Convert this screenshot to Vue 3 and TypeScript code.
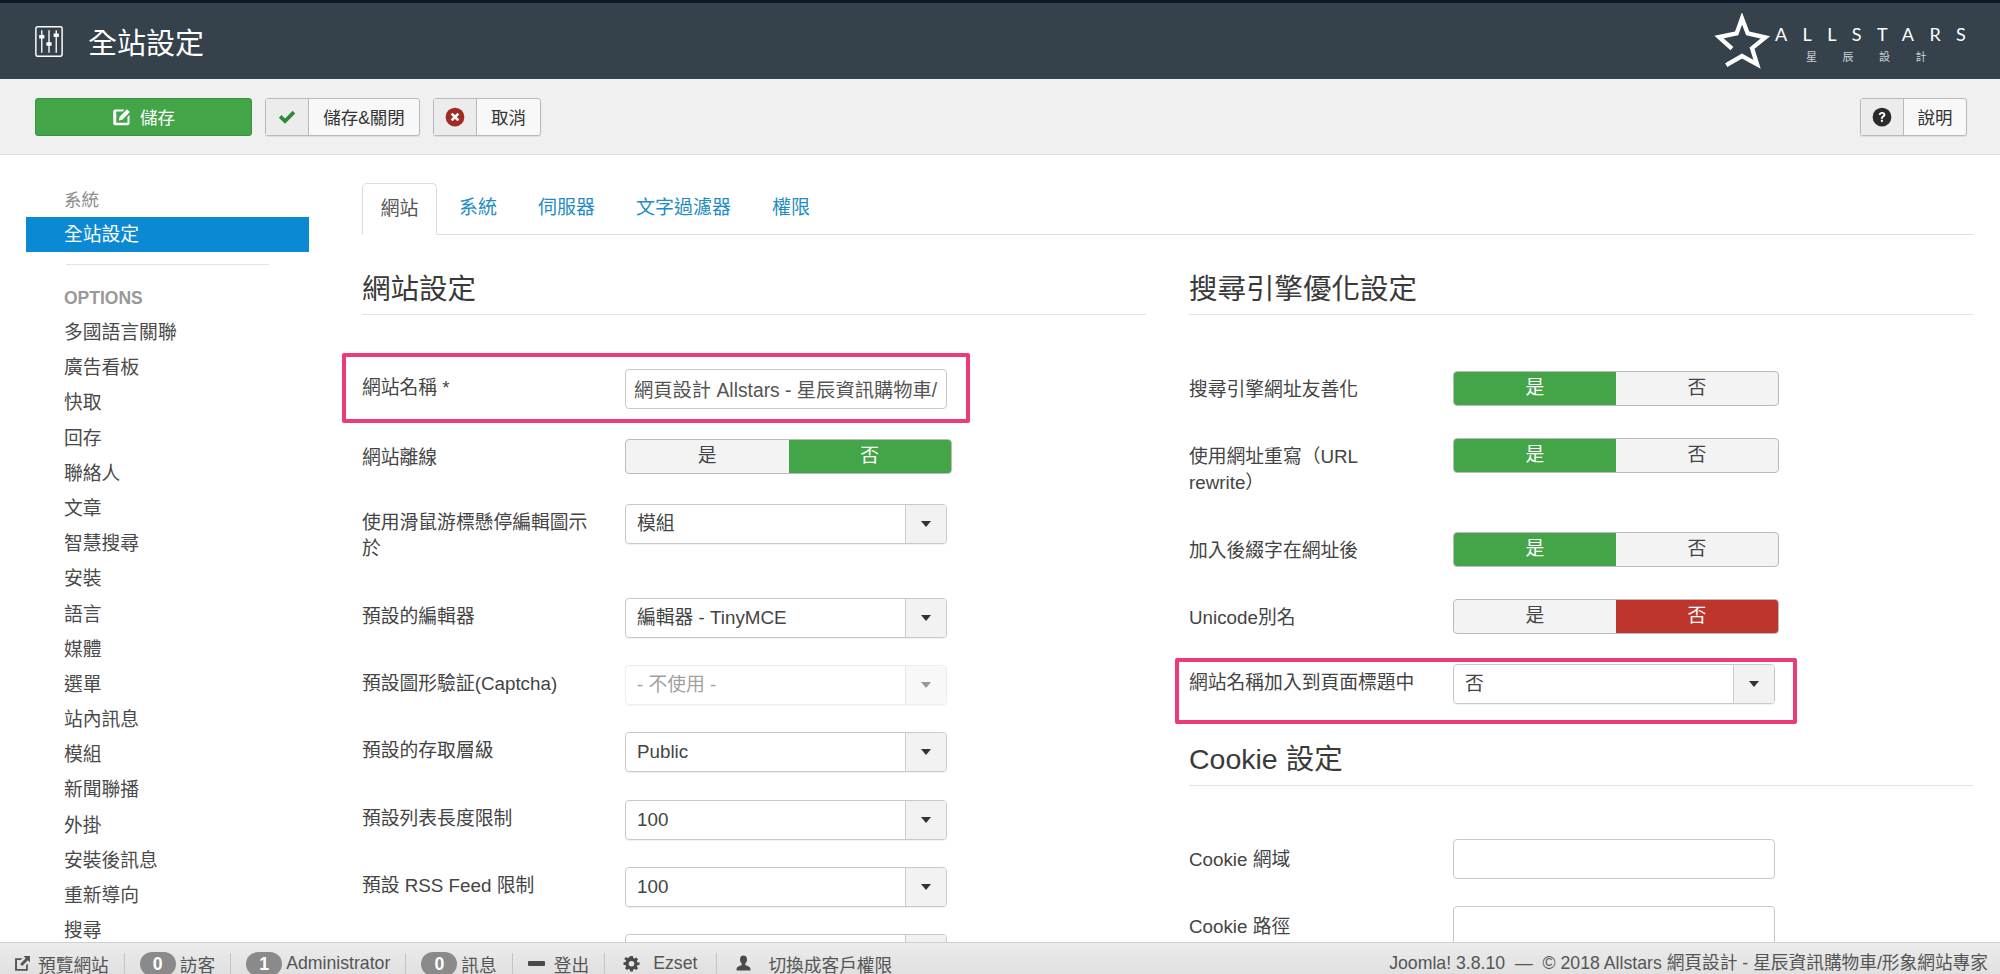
<script setup lang="ts">
interface Row {
  label: string;
  kind: 'input' | 'select' | 'toggle';
  size: string;
  value?: string;
  yes?: boolean;
  red?: boolean;
  disabled?: boolean;
  mark?: boolean;
}

const menu = ['多國語言關聯', '廣告看板', '快取', '回存', '聯絡人', '文章', '智慧搜尋', '安裝', '語言', '媒體', '選單', '站內訊息', '模組', '新聞聯播', '外掛', '安裝後訊息', '重新導向', '搜尋'];
const tabs = ['系統', '伺服器', '文字過濾器', '權限'];

const leftRows: Row[] = [
  { label: '網站名稱 *', kind: 'input', size: 'r70', value: '網頁設計 Allstars - 星辰資訊購物車/', mark: true },
  { label: '網站離線', kind: 'toggle', size: 'r65', yes: false },
  { label: '使用滑鼠游標懸停編輯圖示於', kind: 'select', size: 'r94', value: '模組' },
  { label: '預設的編輯器', kind: 'select', size: 'r67', value: '編輯器 - TinyMCE' },
  { label: '預設圖形驗証(Captcha)', kind: 'select', size: 'r67', value: '- 不使用 -', disabled: true },
  { label: '預設的存取層級', kind: 'select', size: 'r68', value: 'Public' },
  { label: '預設列表長度限制', kind: 'select', size: 'r67', value: '100' },
  { label: '預設 RSS Feed 限制', kind: 'select', size: 'r67', value: '100' },
  { label: '', kind: 'select', size: 'r67', value: '' },
];

const rightRows: Row[] = [
  { label: '搜尋引擎網址友善化', kind: 'toggle', size: 'r67', yes: true },
  { label: '使用網址重寫（URL rewrite）', kind: 'toggle', size: 'r94', yes: true },
  { label: '加入後綴字在網址後', kind: 'toggle', size: 'r67', yes: true },
  { label: 'Unicode別名', kind: 'toggle', size: 'r65', yes: false, red: true },
  { label: '網站名稱加入到頁面標題中', kind: 'select', size: 'r0', value: '否', mark: true },
];

const cookieRows: Row[] = [
  { label: 'Cookie 網域', kind: 'input', size: 'r67', value: '' },
  { label: 'Cookie 路徑', kind: 'input', size: 'r67', value: '' },
];
</script>

<template>
  <div class="page">
    <header class="topbar">
      <div class="title">
        <svg class="title-icon" viewBox="0 0 27 30" fill="none" stroke="#fff">
          <rect x="0.8" y="0.8" width="25.4" height="28.4" rx="1.5" stroke-width="1.4" />
          <path d="M6.5 4v22M13.5 4v22M20.5 4v22" stroke-width="1.3" />
          <path d="M4 10.5h5M11 17.5h5M18 9h5" stroke-width="3.4" />
        </svg>
        <h1>全站設定</h1>
      </div>
      <div class="logo">
        <svg class="star" viewBox="40 22 160 156" fill="none" stroke="#fff" stroke-width="12" stroke-miterlimit="8">
          <path d="M92 121L56 89L105 79L120 37L136 79L185 90L148 120L162 165L120 142L76 167" />
        </svg>
        <div class="logo-text">
          <div class="logo-en">ALLSTARS</div>
          <div class="logo-zh">星辰設計</div>
        </div>
      </div>
    </header>

    <div class="toolbar">
      <button class="btn btn-save">
        <svg class="ico" viewBox="0 0 16 16" fill="#fff">
          <path d="M2.5 2h7.5L8.4 3.6H3.4v9h9V8l1.6-1.6v6.6c0 .9-.7 1.6-1.6 1.6H2.5c-.8 0-1.5-.7-1.5-1.6V3.6C1 2.7 1.7 2 2.5 2z" />
          <path d="M6 8l6-6.2L14.3 4l-6 6.200-2.800.5z" />
        </svg>
        儲存
      </button>
      <button class="btn btn-split close-btn">
        <span class="btn-ico">
          <svg class="ico" viewBox="0 0 16 16"><path d="M1.500 8.500L3.600 6.300L6.400 9.100L12.500 3L14.600 5.200L6.400 13.300z" fill="#2f8a3b" /></svg>
        </span>
        <span class="btn-txt">儲存&amp;關閉</span>
      </button>
      <button class="btn btn-split cancel-btn">
        <span class="btn-ico">
          <svg class="ico" viewBox="0 0 16 16">
            <circle cx="8" cy="8" r="7.500" fill="#a32a22" />
            <path d="M5.300 5.300l5.400 5.400M10.700 5.300l-5.400 5.400" stroke="#fff" stroke-width="2.200" />
          </svg>
        </span>
        <span class="btn-txt">取消</span>
      </button>
      <button class="btn btn-split help-btn">
        <span class="btn-ico">
          <svg class="ico" viewBox="0 0 16 16">
            <circle cx="8" cy="8" r="7.500" fill="#2b2b2b" />
            <path d="M5.400 6.300C5.500 4.800 6.600 4 8.100 4c1.500 0 2.600.9 2.600 2.200 0 1.800-2 1.800-2 3.200H7.100c0-2.200 1.900-2.200 1.900-3.200 0-.5-.4-.8-1-.8-.6 0-1 .4-1.100 1z" fill="#fff" />
            <rect x="7.100" y="10.200" width="1.600" height="1.700" fill="#fff" />
          </svg>
        </span>
        <span class="btn-txt">說明</span>
      </button>
    </div>

    <div class="body">
      <aside class="sidebar">
        <div class="side-group">系統</div>
        <div class="side-active">全站設定</div>
        <div class="side-divider"></div>
        <div class="side-head">OPTIONS</div>
        <div v-for="item in menu" :key="item" class="side-item">{{ item }}</div>
      </aside>

      <main class="content">
        <nav class="tabs">
          <span class="tab tab-active">網站</span>
          <span v-for="tab in tabs" :key="tab" class="tab">{{ tab }}</span>
        </nav>

        <div class="columns">
          <section class="col">
            <h2>網站設定</h2>
            <div class="rows">
              <div v-for="row in leftRows" :key="row.label" class="row" :class="[row.size, { mark: row.mark }]">
                <label class="lbl">{{ row.label }}</label>
                <input v-if="row.kind === 'input'" class="field" readonly :value="row.value" />
                <div v-else-if="row.kind === 'select'" class="select" :class="{ off: row.disabled }">
                  <span class="select-val">{{ row.value }}</span>
                  <span class="select-arrow"><i class="caret"></i></span>
                </div>
                <div v-else class="toggle">
                  <span class="opt" :class="{ on: row.yes }">是</span>
                  <span class="opt" :class="{ on: !row.yes, red: row.red }">否</span>
                </div>
              </div>
            </div>
          </section>

          <section class="col">
            <h2>搜尋引擎優化設定</h2>
            <div class="rows rows-right">
              <div v-for="row in rightRows" :key="row.label" class="row" :class="[row.size, { mark: row.mark }]">
                <label class="lbl">{{ row.label }}</label>
                <div v-if="row.kind === 'select'" class="select">
                  <span class="select-val">{{ row.value }}</span>
                  <span class="select-arrow"><i class="caret"></i></span>
                </div>
                <div v-else class="toggle">
                  <span class="opt" :class="{ on: row.yes }">是</span>
                  <span class="opt" :class="{ on: !row.yes, red: row.red }">否</span>
                </div>
              </div>
            </div>
            <h2 class="cookie-head">Cookie 設定</h2>
            <div class="rows rows-right cookie-rows">
              <div v-for="row in cookieRows" :key="row.label" class="row" :class="row.size">
                <label class="lbl">{{ row.label }}</label>
                <input class="field" readonly :value="row.value" />
              </div>
            </div>
          </section>
        </div>
      </main>
    </div>

    <footer class="status">
      <div class="status-left">
        <span class="st st-first">
          <svg class="st-ico" viewBox="0 0 16 16" fill="#555">
            <path d="M1 3h7L6.400 4.700H2.800v8.500h8.500V9.600L13 8v6.900H1z" />
            <path d="M9 1h6v6l-2-2-5.300 5.300-1.900-1.900L11 3z" />
          </svg>
          預覽網站
        </span>
        <span class="st"><b class="badge">0</b>訪客</span>
        <span class="st"><b class="badge">1</b>Administrator</span>
        <span class="st"><b class="badge">0</b>訊息</span>
        <span class="st st-gap"><i class="minus"></i>登出</span>
        <span class="st st-cog">
          <svg class="st-ico" viewBox="0 0 16 16">
            <path d="M6.500 0h3l.4 2.200 1.500.7L13.300 1.600l2 2.200-1.300 1.900.6 1.500L17 7v2.800l-2.400.5-.6 1.500 1.300 1.900-2 2.100-1.900-1.300-1.500.6L9.500 17.500h-3l-.4-2.400-1.500-.6-1.900 1.300-2-2.100 1.300-1.900-.6-1.500L-1 9.800V7l2.400-.3.6-1.500L-.3 3.300l2-2.200 1.900 1.300 1.500-.7z" transform="translate(1.300 .9) scale(.84)" fill="#4a4a4a" />
            <circle cx="8" cy="8.200" r="2.600" fill="#e6e6e6" />
          </svg>
          Ezset
        </span>
        <span class="st st-user">
          <svg class="st-ico" viewBox="0 0 16 16" fill="#4a4a4a">
            <path d="M8 .5c2 0 3.300 1.500 3.300 3.700 0 1.700-.8 3-1.600 3.800v1.500c.6.500 4.800 1.500 4.800 3.500v1.500h-13V13c0-2 4.200-3 4.800-3.500V8C5.500 7.200 4.700 5.900 4.700 4.200 4.700 2 6 .5 8 .5z" />
          </svg>
          切換成客戶權限
        </span>
      </div>
      <div class="status-right">Joomla! 3.8.10 &nbsp;—&nbsp; © 2018 Allstars 網頁設計 - 星辰資訊購物車/形象網站專家</div>
    </footer>
  </div>
</template>

<style>
html,
body {
  height: 100%;
  overflow: hidden;
}
</style>

<style scoped>
.page {
  height: 974px;
  overflow: hidden;
  position: relative;
  background: #fff;
  color: #444;
  font-family: "Liberation Sans", "Noto Sans CJK TC", sans-serif;
  font-size: 18.8px;
}

.topbar {
  height: 76px;
  border-top: 3px solid #0e1728;
  background: #35424c;
  display: flex;
  align-items: center;
  justify-content: space-between;
  padding: 0 33px 0 35px;
}
.title {
  display: flex;
  align-items: center;
  gap: 25px;
}
.title-icon {
  width: 28px;
  height: 31px;
}
h1 {
  margin: 0;
  color: #fff;
  font-size: 29px;
  font-weight: 400;
}
.logo {
  display: flex;
  align-items: flex-start;
  gap: 4px;
}
.star {
  width: 58px;
  height: 56px;
}
.logo-text {
  color: #fff;
  width: 192px;
  padding-top: 10px;
}
.logo-en {
  font-family: Lato, "Liberation Sans", sans-serif;
  font-size: 18px;
  letter-spacing: 15.400px;
  white-space: nowrap;
  line-height: 22px;
}
.logo-zh {
  font-size: 11px;
  letter-spacing: 25.500px;
  padding-left: 31px;
  margin-top: 6px;
  line-height: 13px;
  white-space: nowrap;
  color: #ccd1d5;
}

.toolbar {
  height: 75px;
  background: #f0f0f0;
  border-bottom: 1px solid #e0e0e0;
  display: flex;
  align-items: center;
  gap: 13px;
  padding: 0 33px 0 35px;
  box-sizing: content-box;
}
.btn {
  height: 38px;
  box-sizing: border-box;
  border-radius: 3px;
  font: inherit;
  font-size: 17.500px;
  display: flex;
  align-items: center;
  padding: 0;
  color: #333;
}
.ico {
  width: 20px;
  height: 20px;
  display: block;
}
.btn-save {
  width: 217px;
  justify-content: center;
  gap: 8px;
  background: #43a548;
  border: 1px solid #3a9140;
  color: #fff;
}
.btn-split {
  background: #f8f8f8;
  border: 1px solid #b9b9b9;
  box-shadow: 0 1px 1px rgba(0, 0, 0, 0.08);
}
.btn-ico {
  width: 42px;
  height: 100%;
  display: flex;
  align-items: center;
  justify-content: center;
  background: #ececec;
  border-right: 1px solid #b9b9b9;
  flex: none;
}
.btn-txt {
  flex: 1;
  text-align: center;
}
.close-btn {
  width: 155px;
}
.cancel-btn {
  width: 108px;
}
.help-btn {
  width: 107px;
  margin-left: auto;
}

.body {
  display: flex;
  align-items: flex-start;
}
.sidebar {
  width: 283px;
  margin-left: 26px;
  flex: none;
  padding-top: 32px;
}
.side-group {
  padding-left: 38px;
  height: 30px;
  line-height: 26px;
  color: #8c8c8c;
  font-size: 17.500px;
}
.side-active {
  height: 35px;
  line-height: 36px;
  padding-left: 38px;
  background: #0b8ad3;
  color: #fff;
}
.side-divider {
  height: 1px;
  background: #e4e4e4;
  margin: 12px 40px 0;
}
.side-head {
  padding-left: 38px;
  margin-top: 20px;
  height: 30px;
  line-height: 26px;
  font-size: 17.500px;
  font-weight: 700;
  color: #999;
}
.side-item {
  padding-left: 38px;
  height: 35.200px;
  line-height: 35.200px;
  color: #4a4a4a;
}

.content {
  width: 1611px;
  margin-left: 53px;
  padding-top: 28px;
}
.tabs {
  display: flex;
  height: 52px;
  box-sizing: border-box;
  border-bottom: 1px solid #ddd;
}
.tab {
  height: 52px;
  line-height: 50px;
  padding: 0 22px 0 19px;
  margin-right: 0;
  color: #1f8dc4;
  font-size: 19px;
  box-sizing: border-box;
}
.tab-active {
  width: 75px;
  padding: 0;
  text-align: center;
  color: #555;
  background: #fff;
  border: 1px solid #ddd;
  border-bottom-color: #fff;
  border-radius: 5px 5px 0 0;
  margin-right: 3px;
}

.columns {
  display: flex;
  gap: 43px;
}
.col {
  width: 784px;
  flex: none;
}
h2 {
  margin: 34px 0 0;
  height: 46px;
  box-sizing: border-box;
  line-height: 40px;
  font-size: 28.500px;
  font-weight: 400;
  color: #3a3a3a;
  border-bottom: 1px solid #e3e3e3;
}
.rows {
  margin-top: 54px;
}
.rows-right {
  margin-top: 56px;
}
.cookie-head {
  margin-top: 35px;
  height: 47px;
}
.cookie-rows {
  margin-top: 53px;
}
.row {
  display: flex;
  align-items: flex-start;
  position: relative;
}
.r70 {
  height: 70px;
}
.r65 {
  height: 65px;
}
.r67 {
  height: 67px;
}
.r68 {
  height: 68px;
}
.r94 {
  height: 94px;
}
.r0 {
  height: 40px;
}
.mark::after {
  content: "";
  position: absolute;
  left: -20px;
  top: -16px;
  width: 628px;
  height: 70px;
  box-sizing: border-box;
  border: 4px solid #ee3a78;
  border-radius: 2px;
  pointer-events: none;
}
.rows-right .mark::after {
  left: -14px;
  top: -6px;
  width: 622px;
  height: 66px;
}
.lbl {
  width: 263px;
  padding-right: 30px;
  box-sizing: border-box;
  flex: none;
  line-height: 26px;
  padding-top: 6px;
  color: #444;
}
.rows-right .lbl {
  width: 264px;
}
.cookie-rows .lbl {
  padding-top: 8px;
}
.field {
  width: 322px;
  height: 40px;
  box-sizing: border-box;
  border: 1px solid #c9c9c9;
  border-radius: 4px;
  padding: 0 8px;
  font: inherit;
  font-size: 19.300px;
  color: #555;
  outline: none;
  background: #fff;
}
.select {
  width: 322px;
  height: 40px;
  box-sizing: border-box;
  border: 1px solid #c9c9c9;
  border-radius: 4px;
  display: flex;
  box-shadow: 0 1px 1px rgba(0, 0, 0, 0.06);
  color: #444;
}
.select-val {
  flex: 1;
  padding-left: 11px;
  line-height: 37px;
}
.select-arrow {
  width: 40px;
  flex: none;
  background: #f2f2f2;
  border-left: 1px solid #ccc;
  display: flex;
  align-items: center;
  justify-content: center;
  border-radius: 0 3px 3px 0;
}
.caret {
  border-top: 6px solid #333;
  border-left: 5px solid transparent;
  border-right: 5px solid transparent;
}
.off {
  opacity: 0.5;
  border-color: #ddd;
}
.toggle {
  width: 327px;
  height: 35px;
  display: flex;
  box-sizing: border-box;
  border-radius: 4px;
  border: 1px solid #bbb;
  background: #f3f3f3;
  overflow: hidden;
}
.rows-right .toggle {
  width: 326px;
}
.opt {
  flex: 1;
  text-align: center;
  line-height: 32px;
  color: #444;
}
.opt.on {
  background: #43a548;
  color: #fff;
}
.opt.red {
  background: #bd352b;
}

.status {
  position: absolute;
  left: 0;
  right: 0;
  bottom: 0;
  height: 32px;
  box-sizing: border-box;
  border-top: 1px solid #cfcfcf;
  background: linear-gradient(#ececec, #e0e0e0);
  display: flex;
  justify-content: space-between;
  align-items: stretch;
  color: #555;
  font-size: 17.700px;
  padding: 10px 12px 0 14px;
  overflow: hidden;
}
.status-left {
  display: flex;
  align-items: stretch;
}
.st {
  display: flex;
  align-items: center;
  gap: 4px;
  padding-right: 16px;
  margin-right: 15px;
  position: relative;
  white-space: nowrap;
}
.st::after {
  content: "";
  position: absolute;
  right: 0;
  top: 0;
  bottom: 0;
  width: 1px;
  background: #c4c4c4;
}
.st:last-child::after {
  display: none;
}
.st-first {
  gap: 7px;
}
.st-gap {
  gap: 9px;
}
.st-cog {
  gap: 13px;
  padding-right: 20px;
  padding-left: 3px;
}
.st-user {
  gap: 16px;
  padding-left: 3px;
}
.st-ico {
  width: 17px;
  height: 17px;
  flex: none;
}
.badge {
  width: 36px;
  height: 24px;
  flex: none;
  border-radius: 12px;
  background: #8a8a8a;
  color: #fff;
  font-weight: 700;
  text-align: center;
  line-height: 24px;
}
.minus {
  width: 17px;
  height: 5px;
  background: #4a4a4a;
  border-radius: 1px;
}
.status-right {
  white-space: nowrap;
  line-height: 21px;
}
</style>
